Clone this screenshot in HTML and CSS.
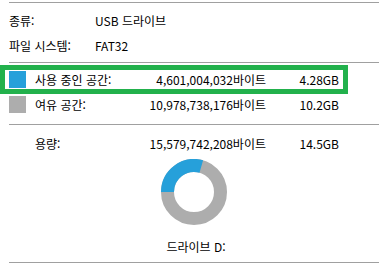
FILE: index.html
```html
<!DOCTYPE html>
<html lang="ko">
<head>
<meta charset="utf-8">
<link rel="stylesheet" href="styles.css">
</head>
<body>
<div class="page">
  <div class="rule rule-top"></div>
  <div class="info">
    <div class="info-row"><span class="info-label">종류:</span><span>USB 드라이브</span></div>
    <div class="info-row"><span class="info-label">파일 시스템:</span><span>FAT32</span></div>
  </div>
  <div class="rule rule-mid"></div>
  <div class="space-row highlight">
    <span class="swatch swatch-used"></span>
    <span class="lbl">사용 중인 공간:</span>
    <span class="bytes">4,601,004,032바이트</span>
    <span class="size">4.28GB</span>
  </div>
  <div class="space-row free">
    <span class="swatch swatch-free"></span>
    <span class="lbl">여유 공간:</span>
    <span class="bytes">10,978,738,176바이트</span>
    <span class="size">10.2GB</span>
  </div>
  <div class="rule rule-cap"></div>
  <div class="space-row cap">
    <span class="lbl">용량:</span>
    <span class="bytes">15,579,742,208바이트</span>
    <span class="size">14.5GB</span>
  </div>
  <div class="chart">
    <svg width="66" height="66" viewBox="0 0 66 66">
      <circle cx="33" cy="33" r="26.5" fill="none" stroke="#adadad" stroke-width="13"/>
      <path d="M6.5 33 A26.5 26.5 0 0 1 40.3 7.53" fill="none" stroke="#26a0da" stroke-width="13"/>
    </svg>
  </div>
  <div class="drive">드라이브 D:</div>
  <div class="rule rule-bottom"></div>
</div>
</body>
</html>
```

FILE: styles.css
```css
html, body {
  margin: 0;
  padding: 0;
  background: #ffffff;
}
body {
  font-family: "Noto Sans CJK KR", "Noto Sans", sans-serif;
  font-size: 12px;
  color: #000000;
  width: 386px;
  height: 266px;
  overflow: hidden;
}
.page {
  width: 386px;
}
.rule {
  height: 1px;
  background: #a0a0a0;
  margin-left: 9px;
  width: 370px;
}
.rule-top {
  margin-top: 2px;
}
.info {
  padding-top: 5px;
}
.info-row {
  display: flex;
  height: 25px;
  line-height: 25px;
  padding-left: 9px;
  white-space: nowrap;
}
.info-label {
  width: 86px;
}
.rule-mid {
  margin-top: 4px;
}
.space-row {
  display: flex;
  align-items: center;
  white-space: nowrap;
}
.highlight {
  box-sizing: border-box;
  width: 348px;
  height: 29px;
  margin-top: 2px;
  border: 5px solid #22b14c;
  padding-left: 4px;
}
.free {
  height: 18px;
  margin-top: 1px;
  padding-left: 9px;
}
.swatch {
  width: 17px;
  height: 17px;
  margin-right: 9px;
  flex: none;
}
.swatch-used {
  background: #26a0da;
}
.swatch-free {
  background: #adadad;
}
.lbl {
  width: 105px;
}
.bytes {
  width: 126px;
  text-align: right;
}
.size {
  width: 73px;
  text-align: right;
}
.rule-cap {
  margin-top: 11px;
}
.cap {
  height: 20px;
  margin-top: 8px;
  padding-left: 35px;
}
.chart {
  display: flex;
  justify-content: center;
  margin-top: 6px;
  margin-left: 9px;
  width: 370px;
  height: 66px;
}
.chart svg {
  display: block;
}
.drive {
  margin-top: 12px;
  margin-left: 11px;
  width: 370px;
  height: 20px;
  line-height: 20px;
  text-align: center;
}
.rule-bottom {
  margin-top: 5px;
}
```
